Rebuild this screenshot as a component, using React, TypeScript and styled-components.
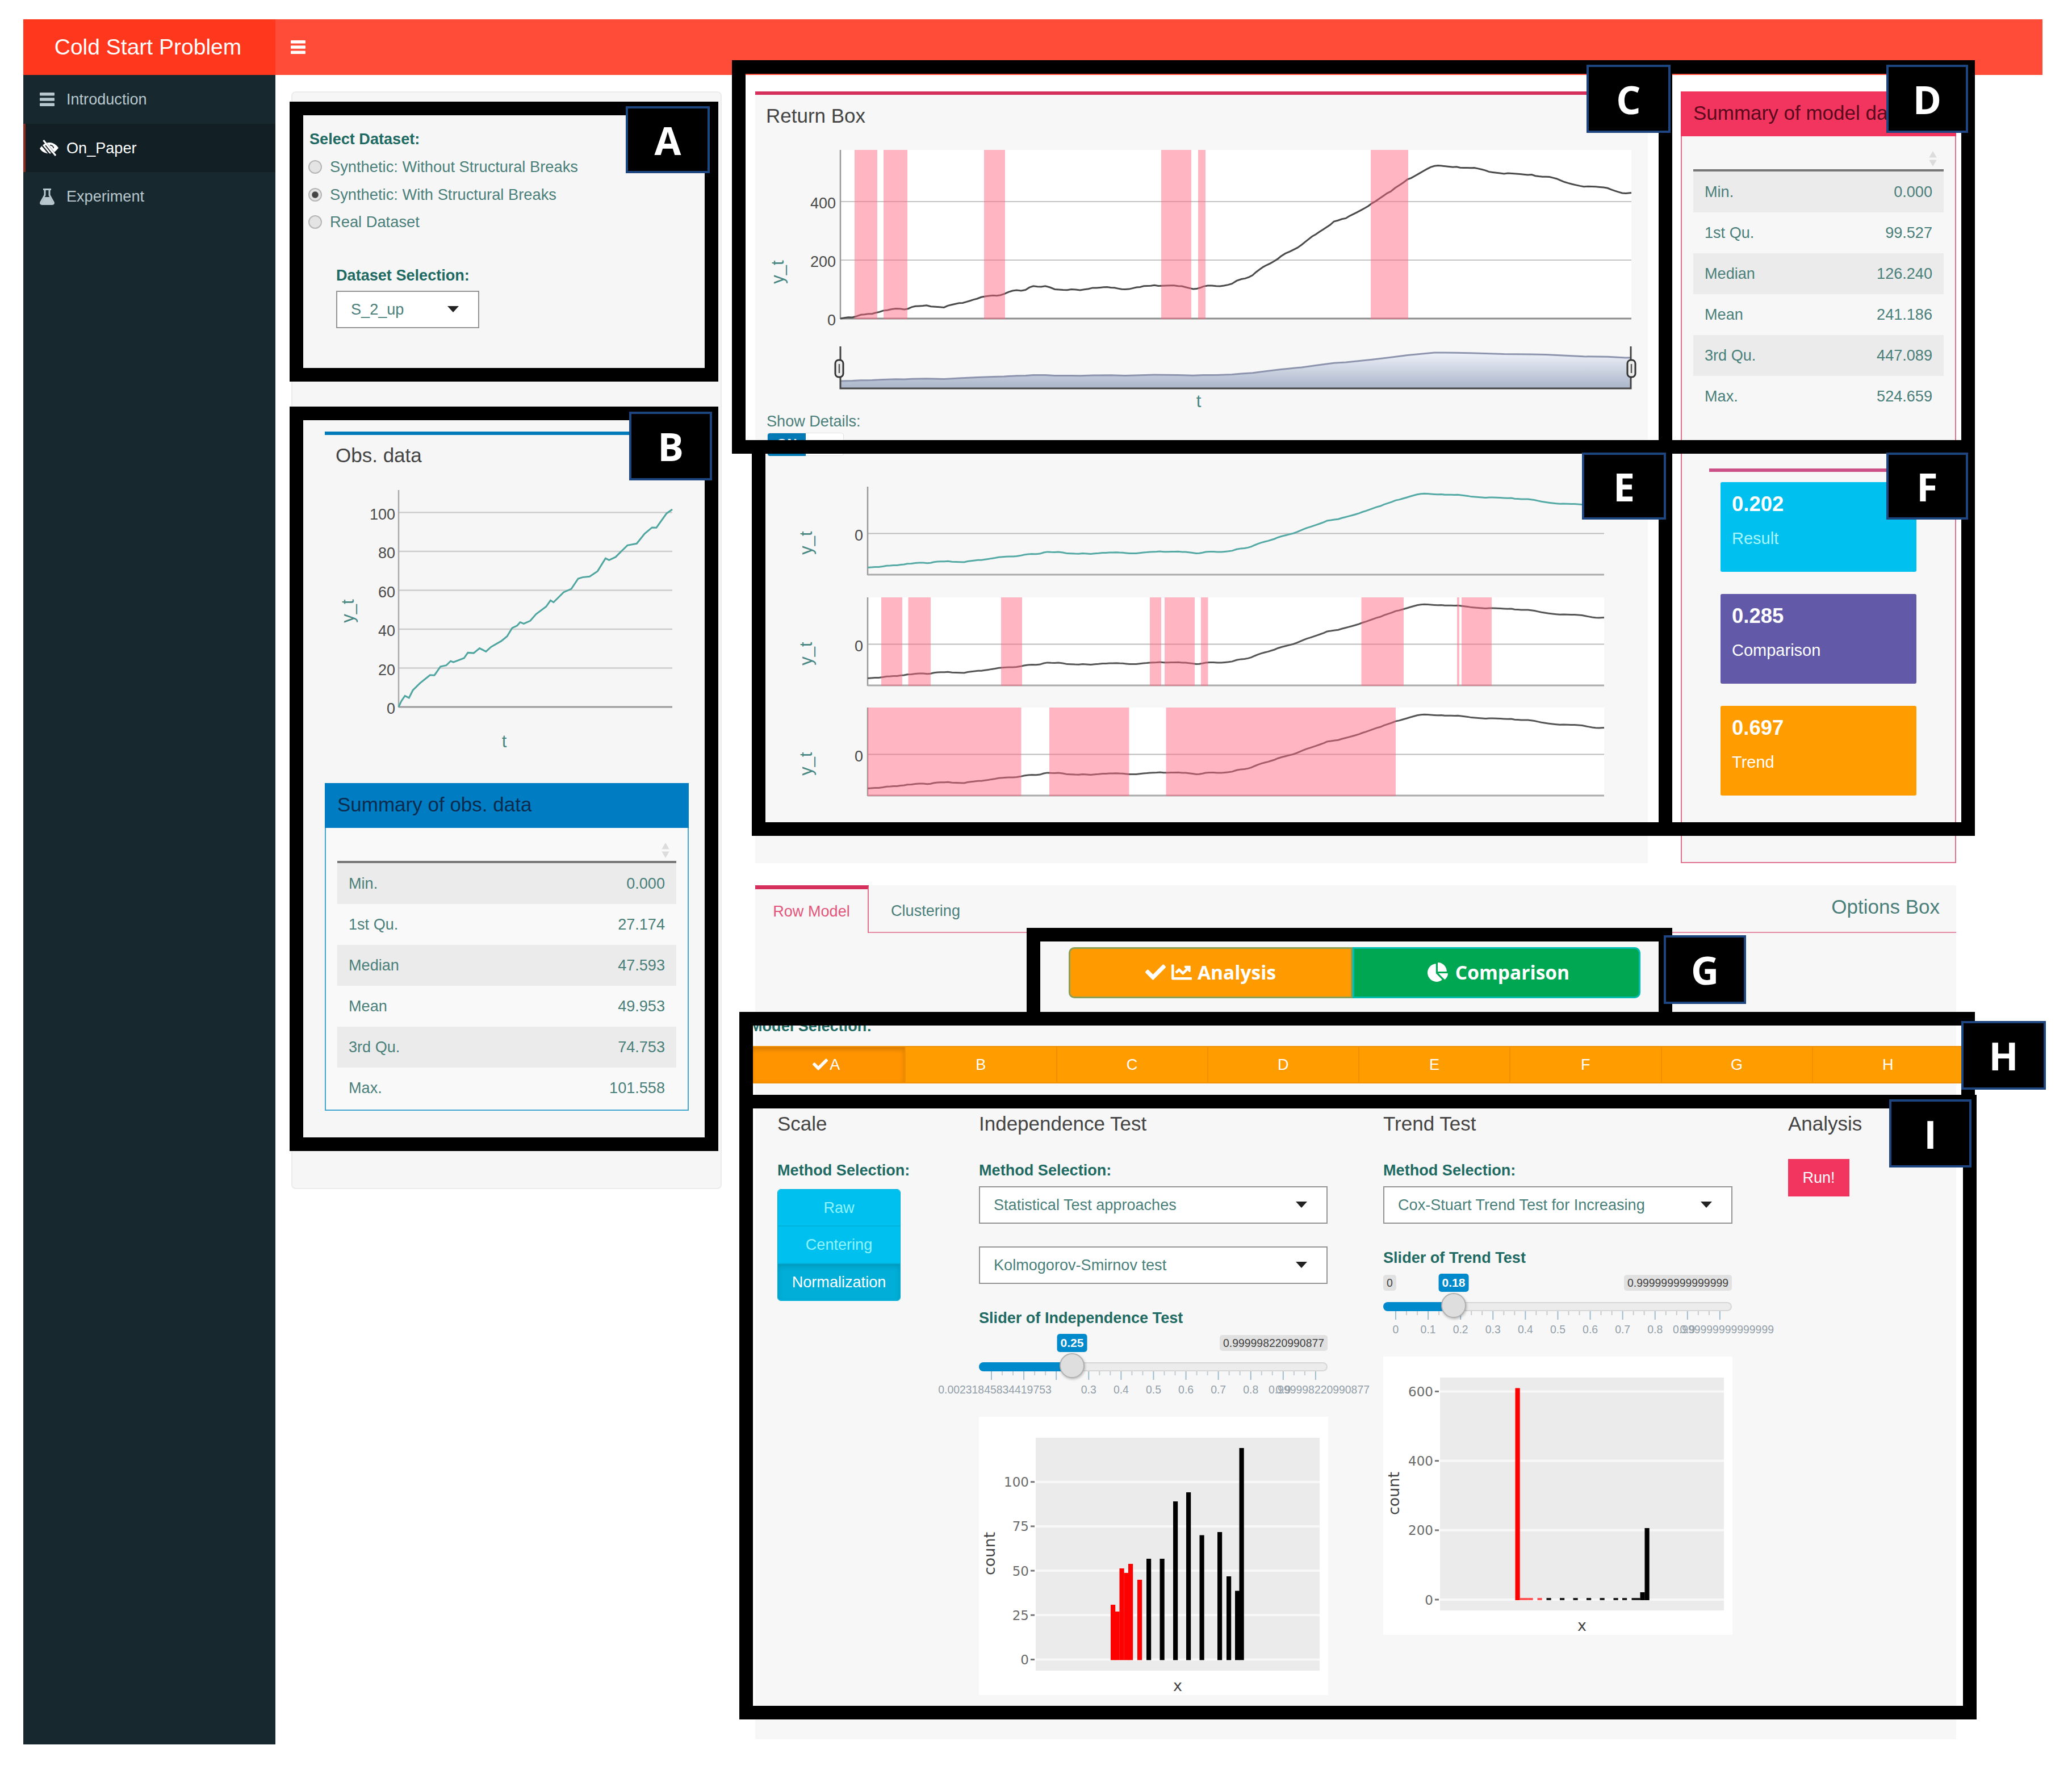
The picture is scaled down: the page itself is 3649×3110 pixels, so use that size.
import React from "react";
import styled, {createGlobalStyle} from "styled-components";
import {FaChartLine, FaChartPie, FaCheck} from "react-icons/fa";

type Point = [number, number]
type Band = [number, number]

const obsData: Point[] = [
    [0, 0], [1, 3], [2.3, 5.7], [3.8, 4.7], [5.2, 8.6], [7.8, 12.2], [11.5, 16.4], [13.1, 16.3], [15.3, 20.8],
    [17.4, 21.4], [19, 23.6], [20, 23], [23.9, 25.1], [25.3, 27.9], [27.4, 27.7], [29.6, 30.2], [31.9, 28.5],
    [33.8, 30.9], [37.5, 33.9], [39.6, 36.3], [41.5, 40.6], [43.3, 41.8], [44.4, 43.6], [45.7, 42.8], [48.1, 44.3],
    [50.2, 47.7], [53.9, 51.6], [55.5, 54.8], [56.6, 53.8], [60.3, 59], [63.1, 60.7], [65.6, 66], [67.2, 66.7],
    [69.8, 67.1], [72.7, 69.8], [75.6, 76.4], [76.9, 75.5], [79.3, 77.1], [81.5, 80.2], [83.6, 83.1], [87, 84],
    [89.9, 89.1], [92.6, 92.3], [94.2, 92.2], [97.9, 99.5], [100, 101.6],
]

const modelData: Point[] = [
    [0, 0], [1.5, 4], [2.6, 13], [4, 16], [5.4, 27], [7, 34], [8.1, 31], [9, 39], [10.9, 45], [13.1, 38], [15, 53],
    [17.3, 68], [19.3, 79], [20.7, 84], [22.3, 97], [23.4, 98], [24.4, 111], [25.9, 111], [27.1, 100], [29.2, 100],
    [30.3, 97], [31.9, 105], [34.2, 106], [36, 100], [37.9, 108], [39.7, 114], [42.7, 111], [44.6, 101], [45.9, 110],
    [47.5, 111], [49.5, 119], [50.7, 135], [52.1, 148], [53.9, 183], [55.7, 213], [56.8, 229], [58.3, 252],
    [60.1, 288], [62.4, 332], [63.9, 343], [67.2, 394], [69.6, 435], [71.7, 476], [75.1, 522], [77.9, 519],
    [79.7, 515], [81.5, 507], [83.9, 495], [87.4, 492], [89.2, 485], [91, 473], [94, 451], [97, 446], [99.3, 428],
    [100, 430],
]

// fills the gaps between the sampled points with small steps
const roughen = (data: Point[], amount: number): Point[] => {
    const out: Point[] = []
    data.forEach(([t, v], i) => {
        out.push([t, v])
        const next = data[i + 1]
        if (!next) return
        const steps = Math.max(1, Math.round((next[0] - t) / 0.5))
        for (let s = 1; s < steps; s++) {
            const k = s / steps
            out.push([t + (next[0] - t) * k, v + (next[1] - v) * k + Math.sin((i * 7 + s) * 12.9898) * amount])
        }
    })
    return out
}

const modelSeries = roughen(modelData, 2.4)

const toPoints = (data: Point[], x: number, width: number, y: number, scale: number) =>
    data.map(([t, v]) => `${(x + t * width / 100).toFixed(1)},${(y - v * scale).toFixed(1)}`).join(' ')

const obsSummary = [['Min.', '0.000'], ['1st Qu.', '27.174'], ['Median', '47.593'], ['Mean', '49.953'],
    ['3rd Qu.', '74.753'], ['Max.', '101.558']]
const modelSummary = [['Min.', '0.000'], ['1st Qu.', '99.527'], ['Median', '126.240'], ['Mean', '241.186'],
    ['3rd Qu.', '447.089'], ['Max.', '524.659']]

const returnBands: Band[] = [[1505, 1545], [1556, 1598], [1733, 1770], [2045, 2098], [2110, 2123], [2414, 2480]]
const analysisBands: Band[] = [[1552, 1589], [1599.5, 1639], [1763, 1800], [2025, 2045], [2051, 2104], [2115, 2127.5],
    [2397.5, 2472], [2566, 2570], [2574, 2627]]
const comparisonBands: Band[] = [[1528, 1798.5], [1848, 1988.5], [2053.5, 2458]]

// x, top, fill
type Bar = [number, number, string]
const independenceBars: Bar[] = [
    [1955.5, 2827, 'red'], [1963, 2839, 'red'], [1971, 2763, 'red'], [1979, 2771, 'red'], [1986.5, 2755, 'red'],
    [2002.5, 2783, 'red'], [2018.5, 2746, '#000'], [2042, 2746, '#000'], [2065.5, 2645, '#000'],
    [2088.5, 2629, '#000'], [2112, 2704.5, '#000'], [2143.5, 2699, '#000'], [2159.5, 2777, '#000'],
    [2174.5, 2802.5, '#000'], [2182, 2551, '#000'],
]
const trendBars: Bar[] = [
    [2668, 2445.5, 'red'], [2676, 2815, '#f55'], [2683, 2815, '#f55'], [2691, 2815, '#f55'], [2707, 2815, '#f55'],
    [2723, 2815, '#222'], [2746.5, 2815, '#222'], [2770, 2815, '#222'], [2793.5, 2815, '#222'],
    [2817, 2815, '#222'], [2841, 2815, '#222'], [2856.5, 2815, '#222'], [2873, 2815, '#222'], [2880, 2815, '#222'],
    [2888, 2805, '#000'], [2896, 2692, '#000'],
]

const frames = [
    {x: 510, y: 179, w: 755, h: 493},
    {x: 510, y: 716, w: 755, h: 1311},
    {x: 1289, y: 106, w: 1656, h: 693},
    {x: 2921, y: 106, w: 557, h: 693},
    {x: 1324, y: 775, w: 1621, h: 697},
    {x: 2921, y: 775, w: 557, h: 697},
    {x: 1808, y: 1634, w: 1137, h: 172},
    {x: 1302, y: 1782, w: 2176, h: 170},
    {x: 1302, y: 1928, w: 2179, h: 1100},
]

const tags = [
    {name: 'A', x: 1102, y: 187, w: 148, h: 118},
    {name: 'B', x: 1108, y: 725, w: 146, h: 121},
    {name: 'C', x: 2794, y: 114, w: 148, h: 120},
    {name: 'D', x: 3322, y: 114, w: 144, h: 120},
    {name: 'E', x: 2786, y: 797, w: 148, h: 118},
    {name: 'F', x: 3322, y: 797, w: 144, h: 118},
    {name: 'G', x: 2930, y: 1647, w: 145, h: 121},
    {name: 'H', x: 3454, y: 1798, w: 149, h: 121},
    {name: 'I', x: 3327, y: 1936, w: 145, h: 120},
]

const BarsIcon = () =>
    <svg width={26} height={24} viewBox="0 0 26 24" fill="currentColor">
        <rect width={26} height={5.6} rx={1}/>
        <rect y={9.2} width={26} height={5.6} rx={1}/>
        <rect y={18.4} width={26} height={5.6} rx={1}/>
    </svg>

const LowVisionIcon = () =>
    <svg width={33} height={29} viewBox="0 0 33 29">
        <path d="M0 15.5C5 8 11 5 17 5s12 3.500 16 9.500C28 21 23 24.500 17 24.500S4 22 0 15.500z" fill="currentColor"/>
        <path d="M18 9.500c4 .3 6 2.500 6.500 5.500" fill="none" stroke="#121f25" strokeWidth={1.6}/>
        <path d="M8 2l21 26M3 9l14 17" fill="none" stroke="#121f25" strokeWidth={2.200}/>
        <path d="M6.500 1L28 28" fill="none" stroke="currentColor" strokeWidth={3}/>
        <path d="M10 10l12 15" fill="none" stroke="#121f25" strokeWidth={1.800}/>
    </svg>

const FlaskIcon = () =>
    <svg width={26} height={29} viewBox="0 0 26 29">
        <path d="M6 1.500h14M9 2v9.500L2 24c-1 2 0 3.500 2 3.500h18c2 0 3-1.500 2-3.500L17 11.500V2" fill="none"
              stroke="currentColor" strokeWidth={3}/>
        <path d="M8.500 15h9l6.500 12H2z" fill="currentColor"/>
    </svg>

const SummaryTable = ({rows}: { rows: string[][] }) =>
    <Table>
        <TableHead><SortIcon viewBox="0 0 14 28"><path d="M7 0L14 12H0zM7 28L0 16H14z"/></SortIcon></TableHead>
        {rows.map(([label, value], i) =>
            <TableRow key={label} $striped={i % 2 === 0}><span>{label}</span><span>{value}</span></TableRow>)}
    </Table>

const Select = ({value, width}: { value: string, width: number }) =>
    <SelectBox $width={width}>{value}<Caret viewBox="0 0 20 11"><path d="M0 0H20L10 11z"/></Caret></SelectBox>

const ObsChart = () =>
    <Chart viewBox="572 825 641 515" $height={515}>
        {[0, 20, 40, 60, 80, 100].map(v => {
            const y = 1246 - v * 3.425
            return <g key={v}>
                <line x1={702} x2={1184} y1={y} y2={y} stroke={v ? '#ccc' : '#999'} strokeWidth={v ? 2.5 : 3}/>
                <AxisText x={696} y={y + 12} textAnchor="end">{v}</AxisText>
            </g>
        })}
        <line x1={702} x2={702} y1={864} y2={1247} stroke="#aaa" strokeWidth={2.5}/>
        <polyline points={toPoints(obsData, 702, 482, 1246, 3.425)} fill="none" stroke="#4fa59f" strokeWidth={3}/>
        <AxisTitle transform="translate(623 1077) rotate(-90)" textAnchor="middle">y_t</AxisTitle>
        <AxisTitle x={888} y={1317} textAnchor="middle">t</AxisTitle>
    </Chart>

const ReturnChart = () => {
    const range = toPoints(modelData, 1480, 1393, 671, 0.0958)
    return (
        <Chart viewBox="1330 226 1572 500" $height={500}>
            <defs>
                <linearGradient id="range" x1="0" y1="0" x2="0" y2="1">
                    <stop offset="0" stopColor="#eef1f9"/>
                    <stop offset="1" stopColor="#a9b5c9"/>
                </linearGradient>
            </defs>
            <rect x={1480} y={264} width={1393} height={297} fill="#fff"/>
            {[0, 200, 400].map(v => {
                const y = 561 - v * 0.515
                return <g key={v}>
                    <line x1={1480} x2={2873} y1={y} y2={y} stroke={v ? '#c4c4c4' : '#8c8c8c'} strokeWidth={v ? 2 : 3}/>
                    <AxisText x={1472} y={y + 12} textAnchor="end">{v}</AxisText>
                </g>
            })}
            <line x1={1480} x2={1480} y1={264} y2={562} stroke="#999" strokeWidth={2.5}/>
            <polyline points={toPoints(modelSeries, 1480, 1393, 561, 0.515)} fill="none" stroke="#4a4a4a" strokeWidth={3}/>
            {returnBands.map(([a, b]) => <BandRect key={a} x={a} y={264} width={b - a} height={298}/>)}
            <polygon points={`1480,684 ${range} 2873,684`} fill="url(#range)"/>
            <polyline points={range} fill="none" stroke="#8d94ad" strokeWidth={3}/>
            <path d="M1480 610V684H2872V610" fill="none" stroke="#444" strokeWidth={3}/>
            {[1478, 2873].map(x => <g key={x}>
                <rect x={x - 7} y={634} width={14} height={30} rx={6} fill="#eee" stroke="#333" strokeWidth={3}/>
                <line x1={x} x2={x} y1={641} y2={657} stroke="#555" strokeWidth={2.5}/>
            </g>)}
            <AxisTitle transform="translate(1380 479) rotate(-90)" textAnchor="middle">y_t</AxisTitle>
            <AxisTitle x={2111} y={717} textAnchor="middle">t</AxisTitle>
        </Chart>
    )
}

const DetailChart = ({bands, color}: { bands?: Band[], color: string }) =>
    <Chart viewBox="1330 838 1572 194.6" $height={194.6}>
        {bands && <rect x={1528} y={858} width={1297} height={155} fill="#fff"/>}
        <line x1={1528} x2={2825} y1={940.5} y2={940.5} stroke="#bbb" strokeWidth={2}/>
        <line x1={1528} x2={1528} y1={858} y2={1014} stroke="#999" strokeWidth={2.5}/>
        <line x1={1528} x2={2825} y1={1013} y2={1013} stroke="#aaa" strokeWidth={3}/>
        <polyline points={toPoints(modelSeries, 1528, 1297, 1000.5, 0.2487)} fill="none" stroke={color} strokeWidth={3}/>
        {bands && bands.map(([a, b]) => <BandRect key={a} x={a} y={858} width={b - a} height={156}/>)}
        <AxisText x={1520} y={953} textAnchor="end">0</AxisText>
        <AxisTitle transform="translate(1430 957) rotate(-90)" textAnchor="middle">y_t</AxisTitle>
    </Chart>

type SliderProps = { value: string, position: number, min?: string, max: string, labels: string[] }
const Slider = ({value, position, min, max, labels}: SliderProps) =>
    <SliderBlock>
        <SliderTags>
            {min ? <LimitTag>{min}</LimitTag> : <span/>}
            <LimitTag>{max}</LimitTag>
            <ValueTag style={{left: position}}>{value}</ValueTag>
        </SliderTags>
        <Track>
            <TrackFill style={{width: position}}/>
            <Handle style={{left: position - 2}}/>
        </Track>
        <Scale viewBox="0 0 614 54">
            {Array.from({length: 31}, (_, i) =>
                <line key={i} x1={22 + i * 19.03} x2={22 + i * 19.03} y1={0} y2={i % 3 ? 7 : 15}
                      stroke={i % 3 ? '#c3ccd2' : '#9dbccd'} strokeWidth={2}/>)}
            {labels.map((label, i) =>
                <ScaleText key={i} x={22 + i * 57.1 + (label.length > 5 ? 6 : 0)} y={39}
                           textAnchor="middle">{label}</ScaleText>)}
        </Scale>
    </SliderBlock>

type HistogramProps = {
    x: number, y: number, bars: Bar[], ticks: number[], zero: number, step: number
}
const Histogram = ({x, y, bars, ticks, zero, step}: HistogramProps) =>
    <Plot viewBox={`${x} ${y} 615 490`}>
        <rect x={x + 100} y={y + 37} width={500} height={410} fill="#ebebeb"/>
        {ticks.map((tick, i) => <g key={tick}>
            <line x1={x + 100} x2={x + 600} y1={zero - i * step} y2={zero - i * step} stroke="#f8f8f8" strokeWidth={4}/>
            <line x1={x + 91} x2={x + 98} y1={zero - i * step} y2={zero - i * step} stroke="#777" strokeWidth={3}/>
            <PlotText x={x + 88} y={zero - i * step + 8.5} textAnchor="end">{tick}</PlotText>
        </g>)}
        {bars.map(([bx, top, fill]) => <rect key={bx} x={bx} y={top} width={8.2} height={zero + 1 - top} fill={fill}/>)}
        <PlotTitle transform={`translate(${x + 28} ${y + 241}) rotate(-90)`} textAnchor="middle">count</PlotTitle>
        <PlotTitle x={x + 350} y={y + 483} textAnchor="middle">x</PlotTitle>
    </Plot>

const App = () => {
    return (
        <Page>
            <GlobalStyle/>
            <Header>
                <Logo>Cold Start Problem</Logo>
                <NavBar><BarsIcon/></NavBar>
            </Header>
            <Body>
                <Sidebar>
                    <MenuItem><BarsIcon/>Introduction</MenuItem>
                    <MenuItem $active><LowVisionIcon/>On_Paper</MenuItem>
                    <MenuItem><FlaskIcon/>Experiment</MenuItem>
                </Sidebar>

                <Well>
                    <Label>Select Dataset:</Label>
                    <RadioList>
                        <RadioRow><Radio/>Synthetic: Without Structural Breaks</RadioRow>
                        <RadioRow><Radio $checked/>Synthetic: With Structural Breaks</RadioRow>
                        <RadioRow><Radio/>Real Dataset</RadioRow>
                    </RadioList>
                    <DatasetField>
                        <Label>Dataset Selection:</Label>
                        <Select value="S_2_up" width={252}/>
                    </DatasetField>
                    <ObsBox>
                        <BoxTitle>Obs. data</BoxTitle>
                        <ObsChart/>
                    </ObsBox>
                    <ObsSummary>
                        <SolidHeader $color="#007cc3" $text="#0c2c4e">Summary of obs. data</SolidHeader>
                        <SummaryTable rows={obsSummary}/>
                    </ObsSummary>
                </Well>

                <Content>
                    <ResultRow>
                        <ReturnBox>
                            <BoxTitle>Return Box</BoxTitle>
                            <ReturnChart/>
                            <DetailsLabel>Show Details:</DetailsLabel>
                            <Toggle><ToggleOn>ON</ToggleOn></Toggle>
                            <DetailChart color="#55aaa6"/>
                            <DetailChart color="#555" bands={analysisBands}/>
                            <DetailChart color="#555" bands={comparisonBands}/>
                        </ReturnBox>
                        <ModelBox>
                            <SolidHeader $color="#f2355f" $text="#5a0a1c">Summary of model data</SolidHeader>
                            <SummaryTable rows={modelSummary}/>
                            <ValueList>
                                <ValueBox $color="#00c0f0" $text="#a8f6ff"><b>0.202</b>Result</ValueBox>
                                <ValueBox $color="#625aa9" $text="#fff"><b>0.285</b>Comparison</ValueBox>
                                <ValueBox $color="#ff9c00" $text="#fff"><b>0.697</b>Trend</ValueBox>
                            </ValueList>
                        </ModelBox>
                    </ResultRow>

                    <OptionsBox>
                        <Tabs>
                            <ActiveTab>Row Model</ActiveTab>
                            <TabRest><span>Clustering</span><OptionsTitle>Options Box</OptionsTitle></TabRest>
                        </Tabs>
                        <ModeGroup>
                            <ModeButton $color="#ff9b00" $border="#8a9f58"><FaCheck/><FaChartLine/>Analysis</ModeButton>
                            <ModeButton $color="#00a753" $border="#00bdb2"><FaChartPie/>Comparison</ModeButton>
                        </ModeGroup>
                        <ModelLabel>Model Selection:</ModelLabel>
                        <ModelGroup>
                            {'ABCDEFGH'.split('').map((name, i) =>
                                <ModelButton key={name} $active={i === 0}>{i === 0 && <FaCheck/>}{name}</ModelButton>)}
                        </ModelGroup>
                        <Columns>
                            <div>
                                <ColumnTitle>Scale</ColumnTitle>
                                <ColumnLabel>Method Selection:</ColumnLabel>
                                <ScaleGroup>
                                    <ScaleButton>Raw</ScaleButton>
                                    <ScaleButton>Centering</ScaleButton>
                                    <ScaleButton $active>Normalization</ScaleButton>
                                </ScaleGroup>
                            </div>
                            <div>
                                <ColumnTitle>Independence Test</ColumnTitle>
                                <ColumnLabel>Method Selection:</ColumnLabel>
                                <SelectStack>
                                    <Select value="Statistical Test approaches" width={614}/>
                                    <Select value="Kolmogorov-Smirnov test" width={614}/>
                                </SelectStack>
                                <ColumnLabel>Slider of Independence Test</ColumnLabel>
                                <Slider value="0.25" position={164} max="0.999998220990877"
                                        labels={['0.00231845834419753', '', '', '0.3', '0.4', '0.5', '0.6', '0.7', '0.8',
                                            '0.9', '0.999998220990877']}/>
                                <Histogram x={1723.5} y={2496} bars={independenceBars} ticks={[0, 25, 50, 75, 100]}
                                           zero={2923.5} step={78.2}/>
                            </div>
                            <div>
                                <ColumnTitle>Trend Test</ColumnTitle>
                                <ColumnLabel>Method Selection:</ColumnLabel>
                                <SelectStack>
                                    <Select value="Cox-Stuart Trend Test for Increasing" width={615}/>
                                </SelectStack>
                                <ColumnLabel>Slider of Trend Test</ColumnLabel>
                                <Slider value="0.18" position={124} min="0" max="0.999999999999999"
                                        labels={['0', '0.1', '0.2', '0.3', '0.4', '0.5', '0.6', '0.7', '0.8', '0.9',
                                            '0.999999999999999']}/>
                                <Histogram x={2435.5} y={2390} bars={trendBars} ticks={[0, 200, 400, 600]}
                                           zero={2818} step={122.2}/>
                            </div>
                            <div>
                                <ColumnTitle>Analysis</ColumnTitle>
                                <RunButton>Run!</RunButton>
                            </div>
                        </Columns>
                    </OptionsBox>
                </Content>
            </Body>

            {frames.map(f => <Frame key={`${f.x}-${f.y}`} $x={f.x} $y={f.y} $w={f.w} $h={f.h}/>)}
            {tags.map(t => <Tag key={t.name} $x={t.x} $y={t.y} $w={t.w} $h={t.h}>{t.name}</Tag>)}
        </Page>
    )
}

export default App

//styled-components
const GlobalStyle = createGlobalStyle`
  * {
    box-sizing: border-box;
  }
  body {
    margin: 0;
    background: #fff;
  }
`
const Page = styled.div`
  position: relative;
  width: 3649px;
  height: 3110px;
  padding: 34px 0 0 41px;
  overflow: hidden;
  font-family: "Liberation Sans", Arial, sans-serif;
  font-size: 27.1px;
  color: #4a7f7a;
  white-space: nowrap;
`
const Header = styled.div`
  display: flex;
  width: 3556px;
  height: 98px;
  color: #fff;
`
const Logo = styled.div`
  display: flex;
  align-items: center;
  justify-content: center;
  width: 444px;
  padding-right: 5px;
  background: #ff371d;
  font-size: 39px;
`
const NavBar = styled.div`
  display: flex;
  flex: 1;
  align-items: center;
  padding-left: 27px;
  background: #ff4c38;
`
const Body = styled.div`
  display: flex;
  align-items: flex-start;
`
const Sidebar = styled.div`
  width: 444px;
  height: 2940px;
  background: #17292f;
`
const MenuItem = styled.div<{ $active?: boolean }>`
  display: flex;
  align-items: center;
  height: 85.7px;
  padding-left: 25px;
  border-left: 4px solid ${props => props.$active ? '#8e2b20' : 'transparent'};
  background: ${props => props.$active ? '#121f25' : 'transparent'};
  background-clip: padding-box;
  color: ${props => props.$active ? '#fff' : '#b8c7ce'};
  svg {
    margin-right: ${props => props.$active ? '14px' : '21px'};
  }
`
const Well = styled.div`
  width: 758px;
  height: 1933px;
  margin: 29px 0 0 28px;
  padding: 62px 0 0 30px;
  border: 2px solid #ebebeb;
  border-radius: 8px;
  background: #f6f6f6;
`
const Label = styled.div`
  line-height: 40px;
  font-weight: 700;
  color: #1f6a62;
`
const RadioList = styled.div`
  margin: 5px 0 0 -2px;
`
const RadioRow = styled.div`
  display: flex;
  align-items: center;
  height: 48.6px;
  font-size: 27.3px;
`
const Radio = styled.span<{ $checked?: boolean }>`
  width: 24px;
  height: 24px;
  margin-right: 14px;
  border: 2px solid #b5b5b5;
  border-radius: 50%;
  background: ${props => props.$checked ? 'radial-gradient(circle, #444 0 5px, #e4e4e4 6.5px)' : '#e4e4e4'};
`
const DatasetField = styled.div`
  display: flex;
  flex-direction: column;
  gap: 7px;
  margin: 49px 0 0 47px;
`
const SelectBox = styled.div<{ $width: number }>`
  display: flex;
  align-items: center;
  justify-content: space-between;
  width: ${props => props.$width}px;
  height: 66px;
  padding: 0 34px 0 24px;
  border: 2px solid #949494;
  background: #fff;
`
const Caret = styled.svg`
  width: 20px;
  height: 11px;
  fill: #222;
`
const ObsBox = styled.div`
  width: 641px;
  margin: 182px 0 0 27px;
  padding-top: 14px;
  border-top: 6px solid #007ab8;
`
const BoxTitle = styled.div`
  padding-left: 19px;
  line-height: 44px;
  font-size: 35px;
  color: #444;
`
const Chart = styled.svg<{ $height: number }>`
  display: block;
  width: 100%;
  height: ${props => props.$height}px;
`
const AxisText = styled.text`
  font-size: 27px;
  fill: #4a4a4a;
`
const AxisTitle = styled.text`
  font-size: 31px;
  fill: #4a8883;
`
const BandRect = styled.rect`
  fill: #ff6680;
  fill-opacity: 0.48;
`
const ObsSummary = styled.div`
  width: 641px;
  height: 577px;
  margin: 40px 0 0 27px;
  border: 2px solid #42a5d0;
  background: #f9f9f9;
`
const SolidHeader = styled.div<{ $color: string, $text: string }>`
  height: 79px;
  margin: -2px -2px 0;
  padding-left: 22px;
  background: ${props => props.$color};
  line-height: 76px;
  font-size: 35px;
  color: ${props => props.$text};
`
const Table = styled.div`
  margin: 0 20px;
`
const TableHead = styled.div`
  display: flex;
  justify-content: flex-end;
  height: 62px;
  padding: 26px 12px 0 0;
  border-bottom: 4px solid #777;
`
const SortIcon = styled.svg`
  width: 14px;
  height: 27px;
  fill: #dcdcdc;
`
const TableRow = styled.div<{ $striped: boolean }>`
  display: flex;
  align-items: center;
  justify-content: space-between;
  height: 72px;
  padding: 0 20px;
  background: ${props => props.$striped ? '#ebebeb' : 'transparent'};
`
const Content = styled.div`
  width: 2115px;
  margin: 29px 0 0 59px;
`
const ResultRow = styled.div`
  display: flex;
  justify-content: space-between;
  height: 1359px;
`
const ReturnBox = styled.div`
  width: 1572px;
  padding-top: 15px;
  border-top: 6px solid #d5305c;
  background: #f7f7f7;
`
const DetailsLabel = styled.div`
  padding-left: 20px;
  line-height: 31px;
`
const Toggle = styled.div`
  width: 135px;
  height: 41px;
  margin: 5px 0 34px 21px;
  border: 1px solid #e2e2e2;
  border-radius: 4px;
  background: #fff;
`
const ToggleOn = styled.div`
  width: 67px;
  height: 40px;
  border-radius: 4px 0 0 4px;
  background: #0079b5;
  line-height: 38px;
  text-align: center;
  font-size: 24px;
  font-weight: 700;
  color: #fff;
`
const ModelBox = styled.div`
  width: 485px;
  border: 2px solid #e0718f;
  background: #f7f7f7;
`
const ValueList = styled.div`
  display: flex;
  flex-direction: column;
  gap: 39px;
  width: 385px;
  margin: 91px 0 0 48px;
  padding: 18px 20px 0;
  border-top: 6px solid #cc5088;
`
const ValueBox = styled.div<{ $color: string, $text: string }>`
  display: flex;
  flex-direction: column;
  height: 158px;
  padding: 15px 0 0 20px;
  border-radius: 3px;
  background: ${props => props.$color};
  line-height: 40px;
  font-size: 29px;
  color: ${props => props.$text};
  b {
    margin-bottom: 22px;
    font-size: 36.5px;
    line-height: 48px;
    height: 42px;
    color: #fff;
  }
`
const OptionsBox = styled.div`
  height: 1504px;
  margin-top: 39px;
  background: #f7f7f7;
`
const Tabs = styled.div`
  display: flex;
  height: 84px;
`
const ActiveTab = styled.div`
  display: flex;
  align-items: center;
  justify-content: center;
  width: 200px;
  border-top: 7px solid #d5305c;
  border-right: 2px solid #e0718f;
  color: #e2567a;
`
const TabRest = styled.div`
  display: flex;
  flex: 1;
  align-items: center;
  justify-content: space-between;
  padding: 7px 29px 0 39px;
  border-bottom: 2px solid #e58aa2;
`
const OptionsTitle = styled.span`
  padding-bottom: 14px;
  font-size: 35px;
`
const ModeGroup = styled.div`
  display: flex;
  width: 1007px;
  height: 90px;
  margin: 25px 0 0 552px;
`
const ModeButton = styled.div<{ $color: string, $border: string }>`
  display: flex;
  flex: 1;
  align-items: center;
  justify-content: center;
  gap: 10px;
  padding-bottom: 2px;
  border: 3px solid ${props => props.$border};
  background: ${props => props.$color};
  font-family: "Open Sans", sans-serif;
  font-size: 33.5px;
  font-weight: 700;
  color: #fff;
  svg {
    width: 36px;
    height: 36px;
  }
  &:first-child {
    border-radius: 10px 0 0 10px;
  }
  &:last-child {
    gap: 13px;
    padding-left: 7px;
    border-radius: 0 10px 10px 0;
  }
`
const ModelLabel = styled(Label)`
  margin: 29px 0 0 -10px;
`
const ModelGroup = styled.div`
  display: flex;
  width: 2136px;
  height: 66px;
  margin: 15px 0 0 -8px;
`
const ModelButton = styled.div<{ $active: boolean }>`
  display: flex;
  flex: 1;
  align-items: center;
  justify-content: center;
  gap: 3px;
  padding-right: ${props => props.$active ? '6px' : 0};
  border: solid #f08f00;
  border-width: 2px 1px;
  background: ${props => props.$active ? '#ff9400' : '#ff9c00'};
  box-shadow: ${props => props.$active ? 'inset 0 4px 8px rgba(0, 0, 0, 0.18)' : 'none'};
  color: #fff;
`
const Columns = styled.div`
  display: grid;
  grid-template-columns: 355px 712px 713px 1fr;
  padding: 49px 0 0 39px;
`
const ColumnTitle = styled.div`
  line-height: 44px;
  font-size: 35px;
  color: #444;
`
const ColumnLabel = styled(Label)`
  margin: 44.6px 0 13.4px;
  line-height: 30px;
`
const ScaleGroup = styled.div`
  width: 217px;
  height: 197px;
  margin-top: 18px;
  border: 1px solid #00acd6;
  border-radius: 6px;
  overflow: hidden;
`
const ScaleButton = styled.div<{ $active?: boolean }>`
  height: 65.5px;
  border-bottom: 2px solid #00b2dc;
  background: ${props => props.$active ? '#00aed8' : '#00c0ef'};
  box-shadow: ${props => props.$active ? 'inset 0 4px 8px rgba(0, 0, 0, 0.14)' : 'none'};
  line-height: 63px;
  text-align: center;
  color: ${props => props.$active ? '#fff' : '#8ff4ff'};
`
const SelectStack = styled.div`
  display: flex;
  flex-direction: column;
  gap: 40px;
`
const SliderBlock = styled.div`
  width: 614px;
`
const SliderTags = styled.div`
  position: relative;
  display: flex;
  align-items: flex-start;
  justify-content: space-between;
  height: 50px;
  padding-top: 2px;
`
const LimitTag = styled.span`
  height: 28px;
  padding: 0 6px;
  border-radius: 5px;
  background: #e1e1e1;
  line-height: 28px;
  font-size: 19.4px;
  color: #444;
`
const ValueTag = styled.span`
  position: absolute;
  top: 0;
  height: 32px;
  padding: 0 6px;
  border-radius: 5px;
  background: #008acb;
  line-height: 32px;
  font-size: 21px;
  font-weight: 700;
  color: #fff;
  transform: translateX(-50%);
`
const Track = styled.div`
  position: relative;
  height: 16px;
  border: 2px solid #d6d6d6;
  border-radius: 8px;
  background: #ececec;
`
const TrackFill = styled.div`
  height: 16px;
  margin: -2px 0 0 -2px;
  border-radius: 8px 0 0 8px;
  background: #008acb;
`
const Handle = styled.div`
  position: absolute;
  top: -18px;
  width: 44px;
  height: 44px;
  border: 2px solid #b0b0b0;
  border-radius: 50%;
  background: #dedede;
  box-shadow: 1px 2px 4px rgba(0, 0, 0, 0.25);
  transform: translateX(-50%);
`
const Scale = styled.svg`
  display: block;
  width: 614px;
  height: 54px;
  overflow: visible;
`
const ScaleText = styled.text`
  font-size: 19.4px;
  fill: #93a0a9;
`
const Plot = styled.svg`
  display: block;
  width: 615px;
  height: 490px;
  margin-top: 26px;
  background: #fff;
`
const PlotText = styled.text`
  font-family: "DejaVu Sans", sans-serif;
  font-size: 23px;
  fill: #6a6a6a;
`
const PlotTitle = styled.text`
  font-family: "DejaVu Sans", sans-serif;
  font-size: 27px;
  fill: #444;
`
const RunButton = styled.div`
  width: 108px;
  height: 66px;
  margin-top: 40px;
  background: #f2355f;
  line-height: 66px;
  text-align: center;
  color: #fff;
`

type PlacedProps = { $x: number, $y: number, $w: number, $h: number }
const Frame = styled.div<PlacedProps>`
  position: absolute;
  left: ${props => props.$x}px;
  top: ${props => props.$y}px;
  width: ${props => props.$w}px;
  height: ${props => props.$h}px;
  border: 24px solid #000;
`
const Tag = styled(Frame)`
  display: flex;
  align-items: center;
  justify-content: center;
  border: 4px solid #1d4680;
  background: #000;
  font-family: "Open Sans", sans-serif;
  font-size: 68px;
  font-weight: 700;
  color: #fff;
`
